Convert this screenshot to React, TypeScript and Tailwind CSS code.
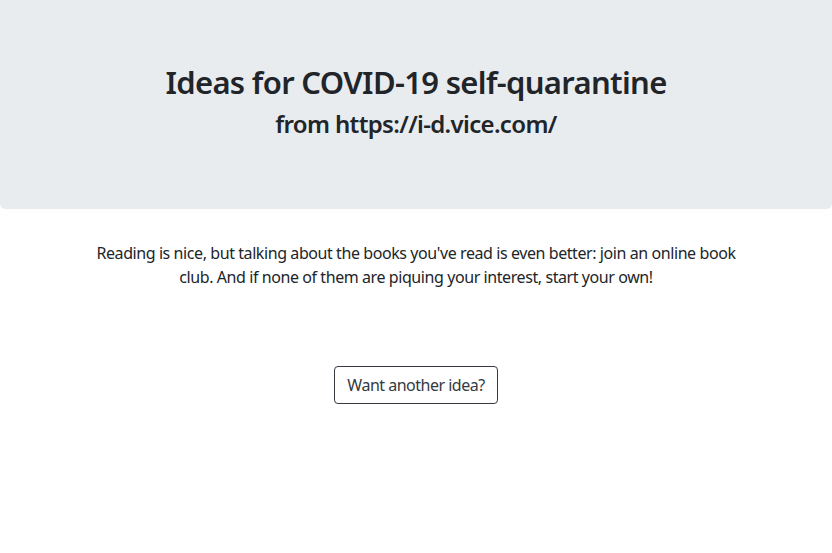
export default function App() {
  return (
    <div className="min-h-[553px] bg-white text-[#212529]" style={{ fontFamily: '"Noto Sans", "Open Sans", sans-serif' }}>
      <div className="flex h-[209px] flex-col items-center justify-center rounded-b-[5px] bg-[#e9ecef] pb-[9px]">
        <h1 className="text-[31px] font-semibold leading-[38px] tracking-[-0.67px]">Ideas for COVID-19 self-quarantine</h1>
        <h2 className="mt-[8px] text-[24px] font-semibold leading-[29px] tracking-[-0.66px]">from https://i-d.vice.com/</h2>
      </div>
      <div className="mx-auto mt-[32px] w-[665px] text-center">
        <p className="text-[16px] leading-[24px] tracking-[-0.42px]">
          Reading is nice, but talking about the books you've read is even better: join an online book club. And if none of them are piquing your interest, start your own!
        </p>
        <div className="mt-[77px] flex justify-center">
          <button className="h-[38px] rounded-[4px] border border-[#343a40] px-[12px] text-[16px] leading-[24px] tracking-[-0.5px] text-[#343a40]">
            Want another idea?
          </button>
        </div>
      </div>
    </div>
  );
}
